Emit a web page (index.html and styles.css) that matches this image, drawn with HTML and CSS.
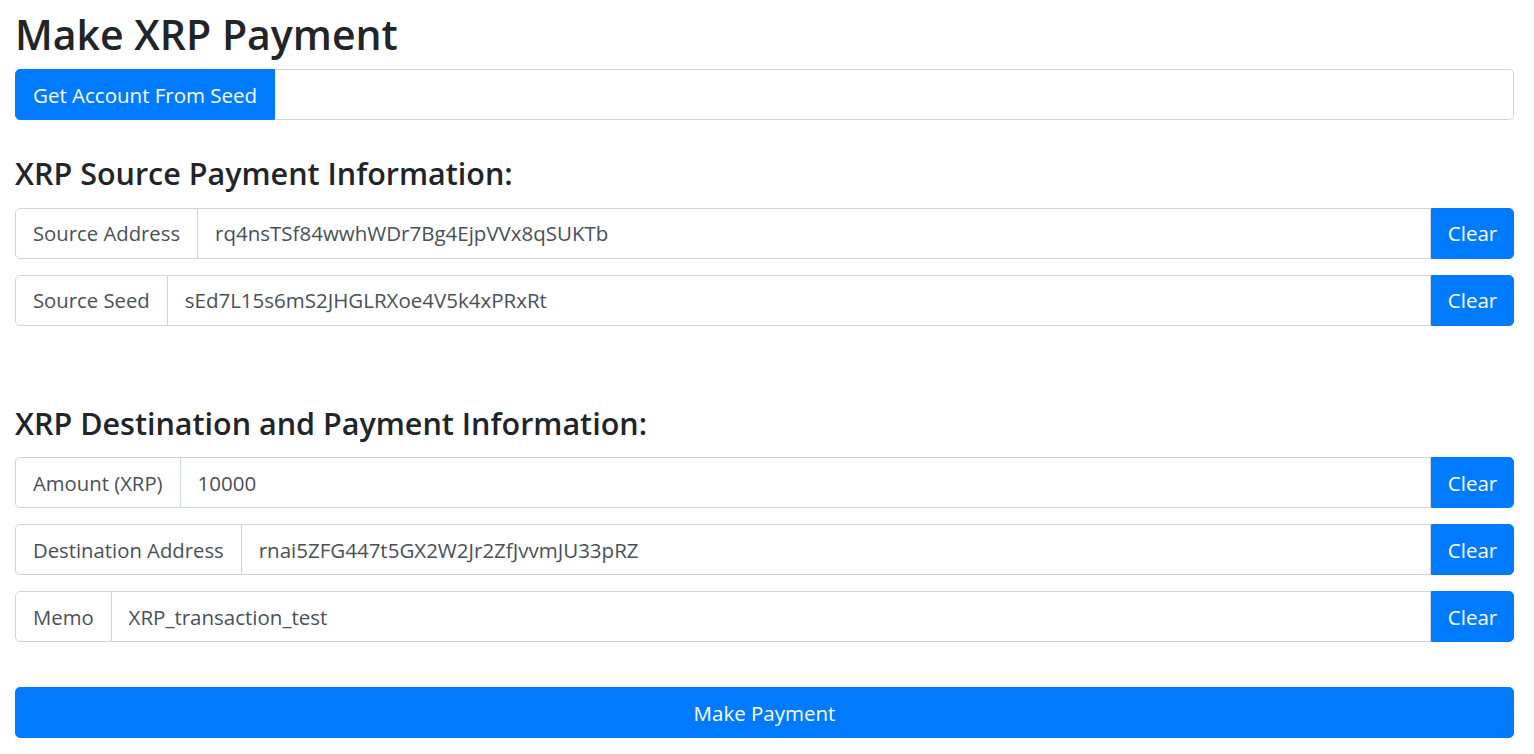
FILE: index.html
```html
<!DOCTYPE html>
<html lang="en">
<head>
<meta charset="utf-8">
<title>Make XRP Payment</title>
<link rel="stylesheet" href="styles.css">
</head>
<body>
<div class="page">
  <h1 class="title">Make XRP Payment</h1>
  <div class="group">
    <button class="btn btn-left">Get Account From Seed</button>
    <input class="field field-right" type="text" value="">
  </div>

  <h3 class="section section-first">XRP Source Payment Information:</h3>
  <div class="group row">
    <span class="label">Source Address</span>
    <input class="field" type="text" value="rq4nsTSf84wwhWDr7Bg4EjpVVx8qSUKTb">
    <button class="btn btn-right">Clear</button>
  </div>
  <div class="group row">
    <span class="label">Source Seed</span>
    <input class="field" type="text" value="sEd7L15s6mS2JHGLRXoe4V5k4xPRxRt">
    <button class="btn btn-right">Clear</button>
  </div>

  <h3 class="section section-second">XRP Destination and Payment Information:</h3>
  <div class="group row">
    <span class="label">Amount (XRP)</span>
    <input class="field" type="text" value="10000">
    <button class="btn btn-right">Clear</button>
  </div>
  <div class="group row">
    <span class="label">Destination Address</span>
    <input class="field" type="text" value="rnai5ZFG447t5GX2W2Jr2ZfJvvmJU33pRZ">
    <button class="btn btn-right">Clear</button>
  </div>
  <div class="group row">
    <span class="label">Memo</span>
    <input class="field" type="text" value="XRP_transaction_test">
    <button class="btn btn-right">Clear</button>
  </div>

  <button class="btn btn-block">Make Payment</button>
</div>
</body>
</html>
```

FILE: styles.css
```css
* { box-sizing: border-box; }
html, body { margin: 0; padding: 0; background: #fff; }
body {
  font-family: "Open Sans", "Noto Sans", "Liberation Sans", sans-serif;
  color: #212529;
}
.page {
  padding: 10px 20px 0 15px;
}
.title {
  font-size: 41px;
  font-weight: 600;
  line-height: 1.2;
  margin: 0 0 10px 0;
  color: #212529;
}
.section {
  font-size: 30.5px;
  font-weight: 600;
  line-height: 1.2;
  margin: 0 0 16px 0;
  color: #212529;
}
.section-first { margin-top: 35px; }
.section-second { margin-top: 79px; }
.group {
  display: flex;
  height: 51px;
}
.row { margin-bottom: 16px; }
.field {
  flex: 1;
  min-width: 0;
  height: 51px;
  border: 1px solid #ced4da;
  border-left: 0;
  background: #fff;
  color: #495057;
  font: inherit;
  font-size: 20.5px;
  padding: 0 17px;
  outline: none;
}
.field-right { border-radius: 0 5px 5px 0; border-left: 0; }
.label {
  display: flex;
  align-items: center;
  height: 51px;
  padding: 0 17px;
  border: 1px solid #ced4da;
  border-radius: 5px 0 0 5px;
  background: #fff;
  color: #495057;
  font-size: 20.3px;
  white-space: nowrap;
}
.btn {
  font: inherit;
  font-size: 20.5px;
  color: #fff;
  background: #007bff;
  border: 1px solid #007bff;
  height: 51px;
  padding: 0 17px;
  cursor: pointer;
  white-space: nowrap;
}
.btn-left { border-radius: 5px 0 0 5px; }
.btn-right { border-radius: 0 5px 5px 0; width: 83px; padding: 0; }
.btn-block {
  display: block;
  width: 100%;
  border-radius: 5px;
  margin-top: 45px;
}
```
